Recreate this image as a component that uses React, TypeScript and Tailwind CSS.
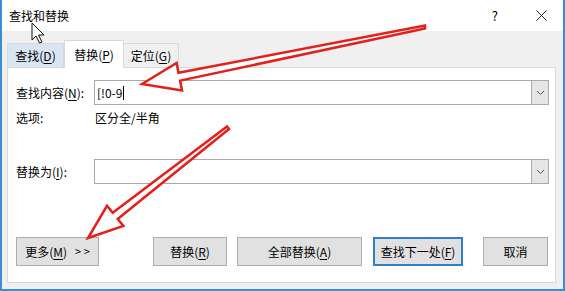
import * as React from 'react';

const font = { fontFamily: '"Microsoft YaHei UI", "Noto Sans CJK SC", "Noto Sans", sans-serif' };

const U: React.FC<{ children: React.ReactNode }> = ({ children }) => <span className="underline underline-offset-2">{children}</span>;

const Combo: React.FC<{ value?: string; caret?: boolean }> = ({ value, caret }) => (
  <div className="flex h-[25px] flex-1 border border-[#a9a9a9] bg-white">
    <div className="flex flex-1 items-center pl-[2px] text-[12px] text-black">
      {value}
      {caret && <span className="ml-[1px] inline-block h-[14px] w-px bg-black" />}
    </div>
    <div className="flex w-[17px] items-center justify-center border-l border-[#a9a9a9] bg-[#e6e6e6]">
      <svg width="9" height="6" viewBox="0 0 9 6">
        <path d="M1 1 L4.5 4.5 L8 1" fill="none" stroke="#555" strokeWidth="1" />
      </svg>
    </div>
  </div>
);

const Btn: React.FC<{ w: string; focused?: boolean; children: React.ReactNode }> = ({ w, focused, children }) => (
  <div
    className={`flex h-[29px] items-center justify-center bg-[#e1e1e1] text-[12px] text-black ${w} ${
      focused ? 'border-2 border-[#2f7fc8]' : 'border border-[#adadad]'
    }`}
  >
    {children}
  </div>
);

export default function App() {
  return (
    <div className="relative flex h-[291px] w-[565px] flex-col border-x-2 border-b-2 border-[#3b8ed6] bg-white" style={font}>
      {/* Title bar */}
      <div className="flex h-[31px] items-center justify-between pl-[7px] pr-[16px] text-[12px] text-black">
        <span>查找和替换</span>
        <div className="flex items-center gap-[38px] text-[13px]">
          <span>?</span>
          <svg width="11" height="11" viewBox="0 0 11 11">
            <path d="M0.5 0.5 L10.5 10.5 M10.5 0.5 L0.5 10.5" stroke="#222" strokeWidth="1" />
          </svg>
        </div>
      </div>

      {/* Body */}
      <div className="flex flex-1 flex-col bg-[#f0f0f0] pl-[5px] pr-[7px] pt-[9px]">
        {/* Tabs */}
        <div className="flex h-[27px] items-end text-[12px] text-black">
          <div className="flex h-[24px] w-[57px] items-center justify-center border border-b-0 border-[#d9d9d9] bg-[#d8e6f3]">
            查找(<U>D</U>)
          </div>
          <div className="relative z-10 -mb-px flex h-[28px] w-[60px] items-center justify-center border border-b-0 border-[#d9d9d9] bg-white">
            替换(<U>P</U>)
          </div>
          <div className="flex h-[24px] w-[55px] items-center justify-center border border-b-0 border-l-0 border-[#d9d9d9] bg-[#f0f0f0]">
            定位(<U>G</U>)
          </div>
        </div>

        {/* Panel */}
        <div className="flex h-[216px] flex-col border border-[#d9d9d9] bg-white pl-[8px] pr-[6px] pt-[12px] text-[12px] text-black">
          <div className="flex items-center">
            <span className="w-[78px]">查找内容(<U>N</U>):</span>
            <Combo value="[!0-9" caret />
          </div>
          <div className="mt-[5px] flex h-[16px] items-center">
            <span className="w-[79px]">选项:</span>
            <span>区分全/半角</span>
          </div>
          <div className="mt-[33px] flex items-center">
            <span className="w-[78px]">替换为(<U>I</U>):</span>
            <Combo />
          </div>
          <div className="mt-[53px] flex items-center">
            <Btn w="w-[83px]">
              更多(<U>M</U>)<span className="ml-[8px] text-[11px]">&gt; &gt;</span>
            </Btn>
            <div className="ml-[54px]">
              <Btn w="w-[74px]">替换(<U>R</U>)</Btn>
            </div>
            <div className="ml-[10px]">
              <Btn w="w-[125px]">全部替换(<U>A</U>)</Btn>
            </div>
            <div className="ml-[11px]">
              <Btn w="w-[90px]" focused>
                查找下一处(<U>F</U>)
              </Btn>
            </div>
            <div className="ml-[20px]">
              <Btn w="w-[65px]">取消</Btn>
            </div>
          </div>
        </div>
      </div>

      {/* Annotations: red arrows + mouse cursor */}
      <svg className="pointer-events-none absolute left-[-2px] top-0" width="565" height="291" viewBox="0 0 565 291">
        <polygon
          points="142,84 182,90.4 180.1,80.6 425,28.5 425,25.5 178.5,72.8 176.6,63"
          fill="#fff"
          stroke="#e3201b"
          strokeWidth="2.5"
          strokeLinejoin="miter"
        />
        <polygon
          points="88,238 123.4,226 117.7,219 229,129 227,126.5 112.7,212.8 107,205.8"
          fill="#fff"
          stroke="#e3201b"
          strokeWidth="2.5"
          strokeLinejoin="miter"
        />
        <g transform="translate(32,23)">
          <polygon points="0,0 0,17 4,13 7.5,20 10,19 6.5,12 12,12" fill="#fff" stroke="#111" strokeWidth="1" />
        </g>
      </svg>
    </div>
  );
}
